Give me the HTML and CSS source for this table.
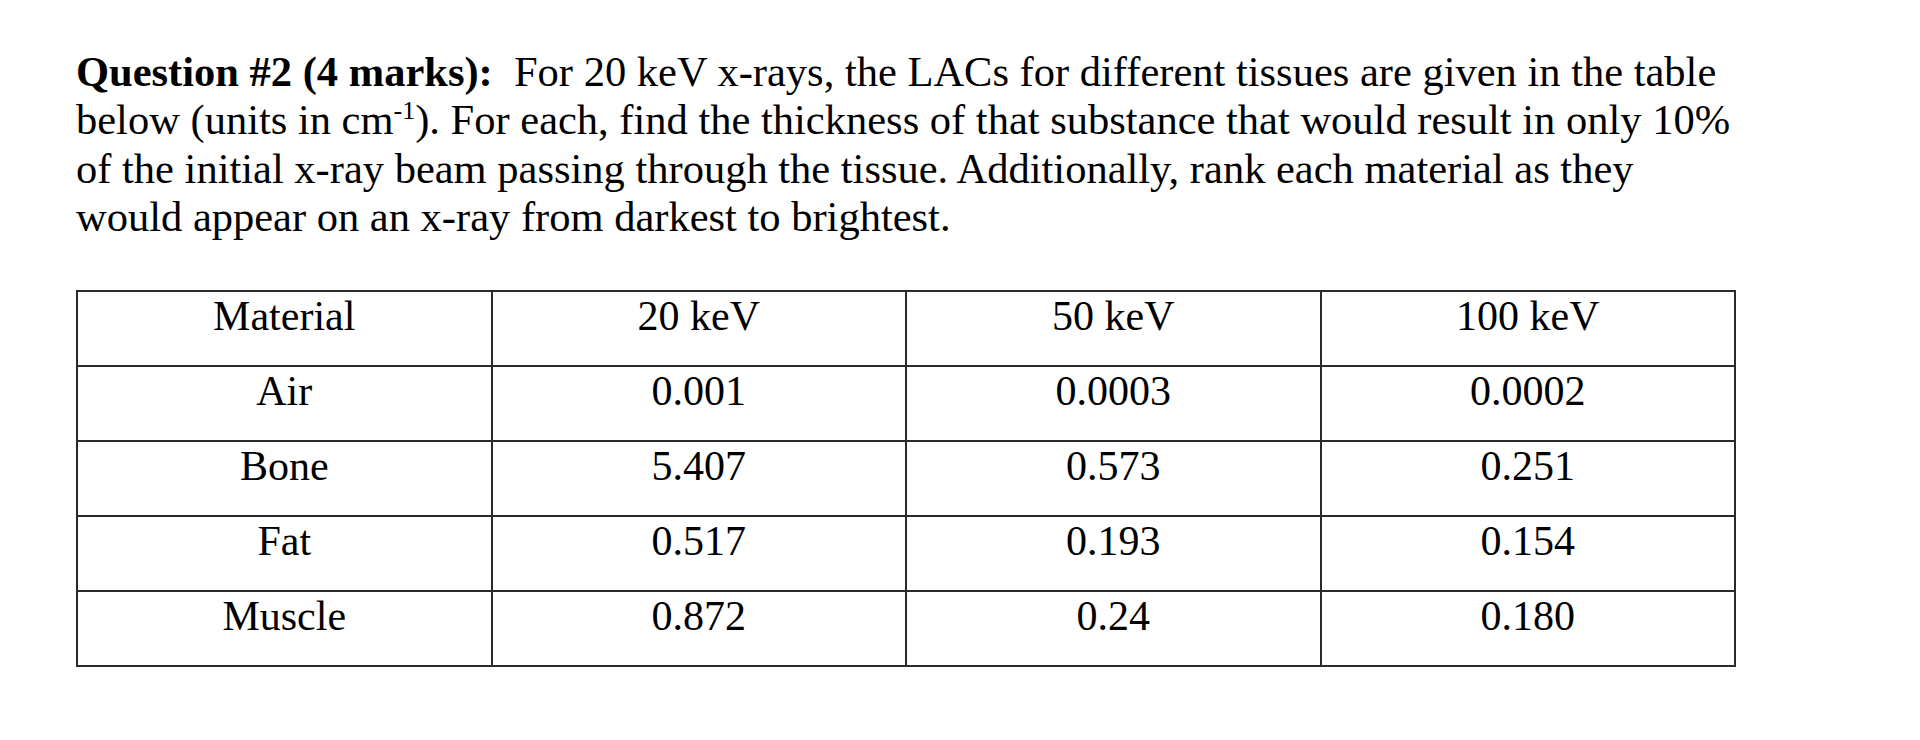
FILE: index.html
```html
<!DOCTYPE html>
<html lang="en">
<head>
  <meta charset="UTF-8" />
  <title>Question 2</title>
  <link rel="stylesheet" href="styles.css">
</head>
<body>
  <div class="page">
    <p class="question">
      <b>Question #2 (4 marks):</b>&nbsp; For 20 keV x-rays, the LACs for different tissues are given in the table<br>
      below (units in cm<sup>-1</sup>). For each, find the thickness of that substance that would result in only 10%<br>
      of the initial x-ray beam passing through the tissue. Additionally, rank each material as they<br>
      would appear on an x-ray from darkest to brightest.
    </p>

    <table class="lac">
      <tr><td>Material</td><td>20 keV</td><td>50 keV</td><td>100 keV</td></tr>
      <tr><td>Air</td><td>0.001</td><td>0.0003</td><td>0.0002</td></tr>
      <tr><td>Bone</td><td>5.407</td><td>0.573</td><td>0.251</td></tr>
      <tr><td>Fat</td><td>0.517</td><td>0.193</td><td>0.154</td></tr>
      <tr><td>Muscle</td><td>0.872</td><td>0.24</td><td>0.180</td></tr>
    </table>
  </div>
</body>
</html>
```

FILE: styles.css
```css
html, body {
  margin: 0;
  background-color: #fff;
}

body {
  font-family: "Liberation Serif", "Times New Roman", serif;
  color: #000;
}

.page {
  padding: 48px 0 0 76px;
}

.question {
  margin: 0;
  font-size: 42.5px;
  line-height: 48.3px;
}

.question sup {
  font-size: 26px;
  line-height: 0;
  vertical-align: 15px;
}

.lac {
  margin-top: 49px;
  border-collapse: collapse;
  font-size: 42px;
}

.lac td {
  width: 412.5px;
  height: 73px;
  padding: 0;
  border: 2px solid #2b2b2b;
  text-align: center;
  vertical-align: top;
  line-height: 48px;
}
```
